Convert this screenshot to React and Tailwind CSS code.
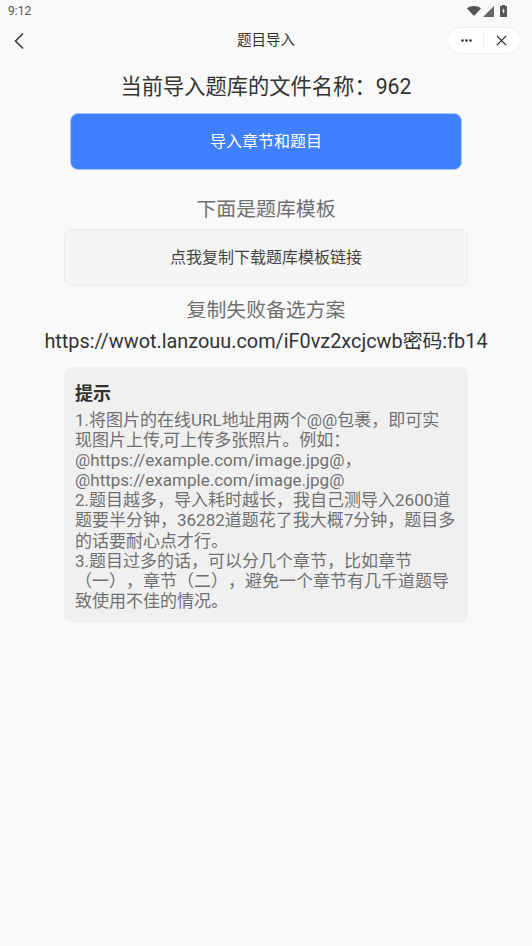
import React from "react";

const FONT = 'font-["Roboto","Noto_Sans_CJK_SC",sans-serif]';

function StatusBar() {
  return (
    <div className="flex h-[22px] items-center justify-between pl-[8px] pr-[25px]">
      <span className="text-[12px] text-[#555]">9:12</span>
      <div className="flex items-center">
        <svg width="14" height="10" viewBox="0 0 14 10"><path d="M0 2.4C4 -.8 10 -.8 14 2.4L7 10z" fill="#555" /></svg>
        <svg width="11" height="11" viewBox="0 0 11 11" className="ml-[2px]"><path d="M11 0V11H0z" fill="#666" /></svg>
        <svg width="7" height="12" viewBox="0 0 7 12" className="ml-[6px]">
          <path d="M2 0H5V1H7V12H0V1H2z" fill="#555" />
          <path d="M3.8 3L2 6.6H3.2V9L5 5.4H3.8z" fill="#fafafa" />
        </svg>
      </div>
    </div>
  );
}

function NavBar() {
  return (
    <div className="relative flex h-[38px] items-center justify-center">
      <svg width="12" height="18" viewBox="0 0 12 18" className="absolute left-[13px] top-[10px]">
        <path d="M10 1.5L2.5 9L10 16.5" fill="none" stroke="#333" strokeWidth="1.5" />
      </svg>
      <span className="-mt-[1px] text-[14.5px] text-[#333]">题目导入</span>
      <div className="absolute right-[11px] top-[5px] flex h-[27px] w-[74px] items-center rounded-full border border-[#efefef] bg-white">
        <div className="flex w-[37px] justify-center">
          <svg width="11" height="3" viewBox="0 0 11 3">
            <circle cx="1.5" cy="1.5" r="1.3" fill="#333" />
            <circle cx="5.5" cy="1.5" r="1.3" fill="#333" />
            <circle cx="9.5" cy="1.5" r="1.3" fill="#333" />
          </svg>
        </div>
        <div className="-ml-[2px] h-[16px] w-px bg-[#eee]" />
        <div className="flex flex-1 justify-center pr-[1px]">
          <svg width="11" height="11" viewBox="0 0 11 11">
            <path d="M.8 .8L10.2 10.2M10.2 .8L.8 10.2" stroke="#222" strokeWidth="1.2" />
          </svg>
        </div>
      </div>
    </div>
  );
}

export default function App() {
  return (
    <div className={`min-h-[946px] w-full bg-[#f9f9f9] [text-spacing-trim:space-all] ${FONT}`}>
      <StatusBar />
      <NavBar />

      <div className="flex flex-col items-center">
        <h1 className="mt-[12px] text-[21.28px] leading-[30px] text-[#333]">当前导入题库的文件名称：962</h1>

        <button className="mt-[11px] h-[57px] w-[392px] rounded-[8px] border border-[#a9c5fb] bg-[#3f80fe] text-[16px] text-white">
          导入章节和题目
        </button>

        <p className="mt-[26px] text-[19.86px] leading-[28px] text-[#707070]">下面是题库模板</p>

        <button className="mt-[5px] h-[57px] w-[404px] rounded-[8px] border border-[#ebebeb] bg-[#f5f5f5] text-[16px] text-[#444]">
          点我复制下载题库模板链接
        </button>

        <p className="mt-[11px] text-[19.86px] leading-[28px] text-[#707070]">复制失败备选方案</p>
        <p className="mt-[3px] whitespace-nowrap text-[19.86px] leading-[28px] text-[#333]">
          https://wwot.lanzouu.com/iF0vz2xcjcwb密码:fb14
        </p>

        <div className="mt-[11px] w-[404px] rounded-[8px] bg-[#f0f0f0] pb-[12px] pl-[11px] pr-[8px] pt-[12px]">
          <h2 className="mb-[1px] text-[18px] font-bold leading-[30px] text-[#333]">提示</h2>
          <p className="text-[17px] leading-[20.1px] text-[#707070]">
            1.将图片的在线URL地址用两个@@包裹，即可实
            <br />
            现图片上传,可上传多张照片。例如：
            <br />
            @https://example.com/image.jpg@，
            <br />
            @https://example.com/image.jpg@
            <br />
            2.题目越多，导入耗时越长，我自己测导入2600道题要半分钟，36282道题花了我大概7分钟，题目多的话要耐心点才行。
            <br />
            3.题目过多的话，可以分几个章节，比如章节（一），章节（二），避免一个章节有几千道题导致使用不佳的情况。
          </p>
        </div>
      </div>
    </div>
  );
}
